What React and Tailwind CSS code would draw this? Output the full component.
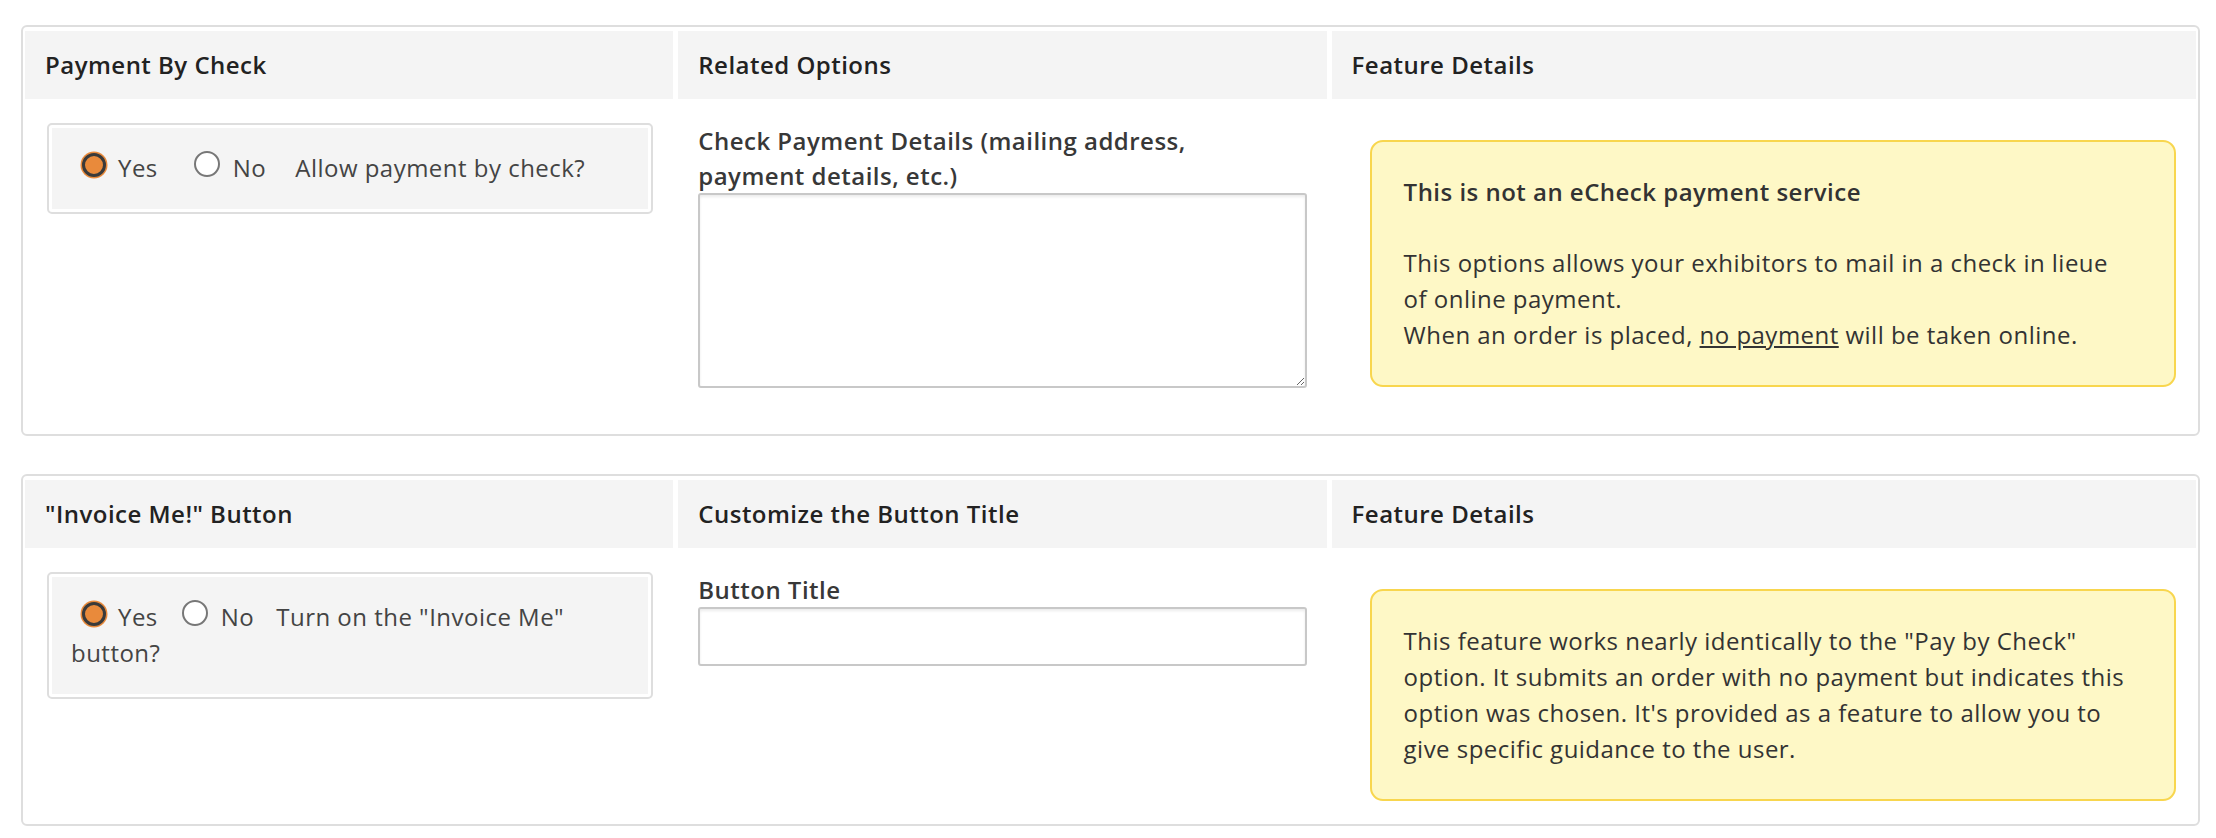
import React from 'react'

const Radio = ({ checked, className = '' }) =>
  checked ? (
    <span
      className={`inline-block w-[24px] h-[24px] rounded-full bg-[#e98a3b] border-[3px] border-[#3a3a3a] shadow-[0_0_0_1.5px_#e98a3b] ${className}`}
    />
  ) : (
    <span className={`inline-block w-[26px] h-[26px] rounded-full bg-white border-2 border-[#777] ${className}`} />
  )

const Panel = ({ headers, children, className = '' }) => (
  <div
    className={`border-2 border-[#dedede] rounded-md px-[2px] py-[4px] grid grid-cols-[3fr_3fr_4fr] gap-x-[5px] gap-y-[4px] items-start ${className}`}
  >
    {headers.map((h) => (
      <div key={h} className="bg-[#f4f4f4] h-[68px] flex items-center px-5 text-[24px] font-semibold text-[#222]">
        {h}
      </div>
    ))}
    {children}
  </div>
)

const RadioBox = ({ children }) => (
  <div className="border-2 border-[#dedede] rounded-[5px] p-[3px] bg-white">
    <div className="bg-[#f4f4f4] px-[19px] pt-[22px] pb-[23px] text-[24px] leading-[36px] text-[#444]">{children}</div>
  </div>
)

const Notice = ({ children }) => (
  <div className="border-2 border-[#f8d64e] bg-[#fef8c6] rounded-[13px] px-8 py-8 text-[24px] leading-[36px] text-[#333]">
    {children}
  </div>
)

const Line = ({ children }) => <span className="block whitespace-nowrap">{children}</span>

export default function App() {
  return (
    <div className="min-h-screen bg-white pt-[25px] pl-[21px] pr-[16px] font-['Open_Sans',sans-serif] tracking-[0.03em]">
      <Panel headers={['Payment By Check', 'Related Options', 'Feature Details']}>
        <div className="pl-[22px] pr-5 pt-5">
          <RadioBox>
            <span className="whitespace-nowrap">
              <Radio checked className="ml-[11px] mr-[12px]" />
              Yes
              <Radio className="ml-[36px] mr-[13px]" />
              No
              <span className="ml-[29px]">Allow payment by check?</span>
            </span>
          </RadioBox>
        </div>
        <div className="px-5 pt-5 pb-5">
          <label className="block text-[24px] leading-[35px] font-semibold text-[#383838]">
            <Line>Check Payment Details (mailing address,</Line>
            <Line>payment details, etc.)</Line>
          </label>
          <textarea className="block w-full h-[195px] mb-[22px] border-2 border-[#c8c8c8] rounded-[3px] bg-white shadow-[inset_0_2px_3px_rgba(0,0,0,0.08)] outline-none" />
        </div>
        <div className="pl-[38px] pr-5 pt-[37px]">
          <Notice>
            <p className="font-semibold">This is not an eCheck payment service</p>
            <p className="mt-[35px]">
              <Line>This options allows your exhibitors to mail in a check in lieue</Line>
              <Line>of online payment.</Line>
              <Line>
                When an order is placed, <u>no payment</u> will be taken online.
              </Line>
            </p>
          </Notice>
        </div>
      </Panel>

      <Panel className="mt-[38px]" headers={['"Invoice Me!" Button', 'Customize the Button Title', 'Feature Details']}>
        <div className="pl-[22px] pr-5 pt-5">
          <RadioBox>
            <span className="block whitespace-nowrap">
              <Radio checked className="ml-[11px] mr-[12px]" />
              Yes
              <Radio className="ml-[24px] mr-[13px]" />
              No
              <span className="ml-[22px]">Turn on the "Invoice Me"</span>
            </span>
            <span className="block">button?</span>
          </RadioBox>
        </div>
        <div className="px-5 pt-5 pb-5">
          <label className="block text-[24px] leading-[35px] font-semibold text-[#383838]">Button Title</label>
          <input
            type="text"
            className="block w-full h-[59px] border-2 border-[#c8c8c8] rounded-[3px] bg-white shadow-[inset_0_2px_3px_rgba(0,0,0,0.08)] outline-none"
          />
        </div>
        <div className="pl-[38px] pr-5 pt-[37px] pb-[19px]">
          <Notice>
            <Line>This feature works nearly identically to the "Pay by Check"</Line>
            <Line>option. It submits an order with no payment but indicates this</Line>
            <Line>option was chosen. It's provided as a feature to allow you to</Line>
            <Line>give specific guidance to the user.</Line>
          </Notice>
        </div>
      </Panel>
    </div>
  )
}
